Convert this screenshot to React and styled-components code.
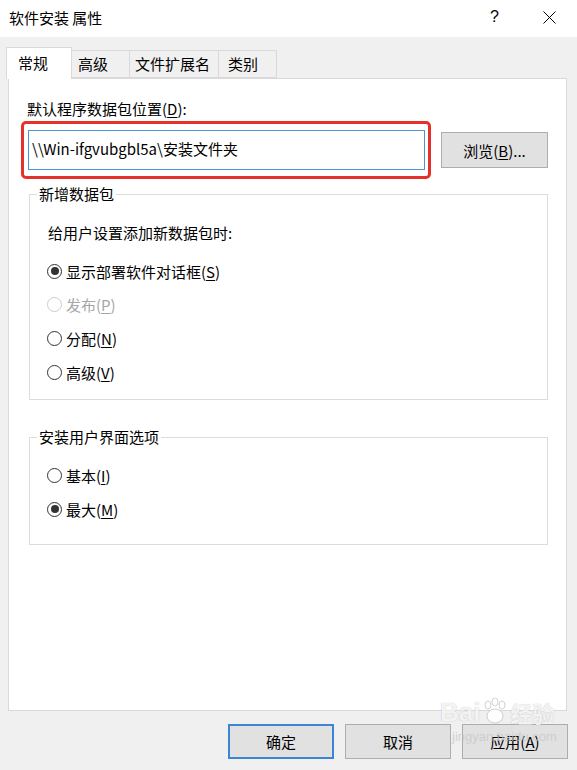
import React from 'react';
import styled, { createGlobalStyle } from 'styled-components';

const GlobalStyle = createGlobalStyle`
  body {
    margin: 0;
    font-family: "Noto Sans CJK SC", "Noto Sans", sans-serif;
    color: #000;
  }
`

const Window = styled.div`
  position: relative;
  width: 577px;
  height: 770px;
  background: #f0f0f0;
  display: flex;
  flex-direction: column;
  overflow: hidden;
`

const TitleBar = styled.div`
  box-sizing: border-box;
  height: 37px;
  background: #fff;
  display: flex;
  align-items: center;
  padding: 0 0 3px 9px;
  font-size: 15px;
`

const TitleButtons = styled.div`
  margin-left: auto;
  display: flex;
  align-items: center;
`

const TitleButton = styled.div`
  width: 55px;
  height: 34px;
  display: flex;
  align-items: center;
  justify-content: center;
  font-family: "Liberation Sans", sans-serif;
  font-size: 16px;
`

const Tabs = styled.div`
  display: flex;
  align-items: flex-end;
  margin-top: 10px;
  padding-left: 6px;
  height: 31px;
  position: relative;
  z-index: 1;
`

const Tab = styled.div`
  box-sizing: border-box;
  width: ${p => p.w}px;
  height: ${p => (p.active ? 32 : 28)}px;
  padding-left: ${p => p.pl}px;
  margin-bottom: ${p => (p.active ? -1 : 0)}px;
  background: ${p => (p.active ? '#fff' : '#f0f0f0')};
  border: 1px solid #d9d9d9;
  border-bottom: ${p => (p.active ? 'none' : '1px solid #d9d9d9')};
  border-left: ${p => (p.first || p.active ? '1px solid #d9d9d9' : 'none')};
  font-size: 15px;
  line-height: ${p => (p.active ? 30 : 26)}px;
  white-space: nowrap;
`

const Panel = styled.div`
  box-sizing: border-box;
  margin: 0 10px 0 8px;
  height: 633px;
  background: #fff;
  border: 1px solid #d9d9d9;
  padding: 20px 0 0 0;
  display: flex;
  flex-direction: column;
`

const Label = styled.div`
  font-size: 15px;
  line-height: 20px;
  padding-left: 18px;
`

const PathRow = styled.div`
  display: flex;
  align-items: center;
  margin-top: 2px;
  padding-left: 12px;
`

const Highlight = styled.div`
  box-sizing: border-box;
  width: 410px;
  height: 58px;
  border: 3px solid #e4312b;
  border-radius: 5px;
  padding: 6px 4px 6px 4px;
`

const PathInput = styled.div`
  box-sizing: border-box;
  height: 40px;
  width: 397px;
  border: 1px solid #4a93d8;
  padding-left: 3px;
  font-size: 15px;
  line-height: 36px;
  white-space: nowrap;
`

const Button = styled.div`
  box-sizing: border-box;
  width: ${p => p.w || 106}px;
  height: ${p => p.h || 35}px;
  background: #e1e1e1;
  border: ${p => (p.primary ? '2px solid #3a86d4' : '1px solid #adadad')};
  display: flex;
  align-items: center;
  justify-content: center;
  font-size: 15px;
`

const BrowseButton = styled(Button)`
  margin-left: 10px;
`

const Group = styled.fieldset`
  box-sizing: border-box;
  margin: ${p => p.mt}px 18px 0 20px;
  height: ${p => p.h}px;
  border: 1px solid #dcdcdc;
  padding: 0 0 0 17px;
  min-width: 0;
`

const Legend = styled.legend`
  font-size: 15px;
  line-height: 20px;
  padding: 0 2px;
  margin-left: -10px;
`

const Hint = styled.div`
  font-size: 15px;
  line-height: 20px;
  margin-top: 19px;
  margin-bottom: 11px;
  padding-left: 1px;
`

const RadioRow = styled.div`
  display: flex;
  align-items: center;
  height: ${p => p.h || 34}px;
  font-size: 15px;
  color: ${p => (p.disabled ? '#a6a6a6' : '#000')};
  gap: 4px;
  margin-top: ${p => p.mt || 0}px;
`

const RadioCircle = styled.span`
  box-sizing: border-box;
  width: 15px;
  height: 15px;
  border-radius: 50%;
  border: 1px solid ${p => (p.disabled ? '#cccccc' : '#333')};
  display: flex;
  align-items: center;
  justify-content: center;
  flex: none;

  &::after {
    content: '';
    width: 8px;
    height: 8px;
    border-radius: 50%;
    background: #333;
    display: ${p => (p.checked ? 'block' : 'none')};
  }
`

const Key = styled.span`
  text-decoration: underline;
  text-underline-offset: 2px;
`

const Footer = styled.div`
  display: flex;
  justify-content: flex-end;
  gap: 11px;
  padding: 13px 9px 0 0;
`

const Watermark = styled.div`
  position: absolute;
  left: 440px;
  top: 697px;
  width: 130px;
  color: rgba(255, 255, 255, 0.85);
  text-shadow: 0 0 1px rgba(150, 150, 150, 0.7);
  font-family: "Liberation Sans", sans-serif;
  pointer-events: none;
`

const WmTop = styled.div`
  display: flex;
  align-items: center;
  font-size: 26px;
  font-weight: bold;
  line-height: 28px;
`

const WmWord = styled.span`
  font-family: "Noto Sans CJK SC", sans-serif;
  font-size: 22px;
`

const WmSub = styled.div`
  font-size: 13px;
  margin-top: 2px;
  padding-left: 12px;
  color: rgba(200, 200, 200, 0.8);
  text-shadow: none;
`

const Radio = ({ checked, disabled, children, mt, h }) => (
  <RadioRow disabled={disabled} mt={mt} h={h}>
    <RadioCircle checked={checked} disabled={disabled} />
    <span>{children}</span>
  </RadioRow>
)

export default function App() {
  return (
    <Window>
      <GlobalStyle />
      <TitleBar>
        软件安装 属性
        <TitleButtons>
          <TitleButton>?</TitleButton>
          <TitleButton>
            <svg width="13" height="13" viewBox="0 0 13 13">
              <path d="M0.5 0.5 L12.5 12.5 M12.5 0.5 L0.5 12.5" stroke="#000" strokeWidth="1" />
            </svg>
          </TitleButton>
        </TitleButtons>
      </TitleBar>

      <Tabs>
        <Tab active first w={66} pl={11}>常规</Tab>
        <Tab w={58} pl={6}>高级</Tab>
        <Tab w={89} pl={5}>文件扩展名</Tab>
        <Tab w={58} pl={9}>类别</Tab>
      </Tabs>

      <Panel>
        <Label>默认程序数据包位置(<Key>D</Key>):</Label>
        <PathRow>
          <Highlight>
            <PathInput>\\Win-ifgvubgbl5a\安装文件夹</PathInput>
          </Highlight>
          <BrowseButton w={107} h={36}>浏览(<Key>B</Key>)...</BrowseButton>
        </PathRow>

        <Group mt={5} h={216}>
          <Legend>新增数据包</Legend>
          <Hint>给用户设置添加新数据包时:</Hint>
          <Radio checked>显示部署软件对话框(<Key>S</Key>)</Radio>
          <Radio disabled h={33}>发布(<Key>P</Key>)</Radio>
          <Radio>分配(<Key>N</Key>)</Radio>
          <Radio>高级(<Key>V</Key>)</Radio>
        </Group>

        <Group mt={27} h={118}>
          <Legend>安装用户界面选项</Legend>
          <Radio mt={11}>基本(<Key>I</Key>)</Radio>
          <Radio checked>最大(<Key>M</Key>)</Radio>
        </Group>
      </Panel>

      <Footer>
        <Button primary>确定</Button>
        <Button>取消</Button>
        <Button>应用(<Key>A</Key>)</Button>
      </Footer>

      <Watermark>
        <WmTop>
          Bai
          <svg width="30" height="30" viewBox="0 0 30 30">
            <g fill="rgba(255,255,255,0.9)" stroke="rgba(160,160,160,0.6)" strokeWidth="0.8">
              <ellipse cx="8" cy="8" rx="3" ry="4" />
              <ellipse cx="15" cy="5" rx="3" ry="4" />
              <ellipse cx="22" cy="8" rx="3" ry="4" />
              <ellipse cx="15" cy="19" rx="8" ry="7" />
            </g>
          </svg>
          <WmWord>经验</WmWord>
        </WmTop>
        <WmSub>jingyan.baidu.com</WmSub>
      </Watermark>
    </Window>
  );
}
